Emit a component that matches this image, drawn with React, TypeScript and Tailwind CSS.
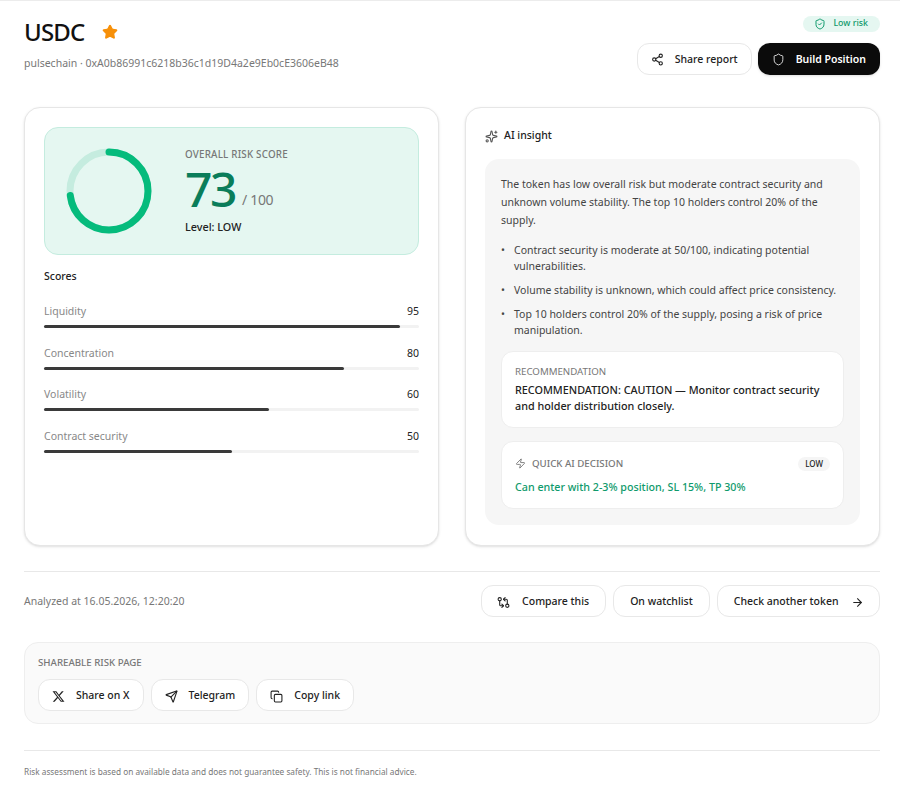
import { ArrowRight, Copy, GitCompareArrows, Send, Share2, Shield, ShieldCheck, Sparkles, Star, Zap } from "lucide-react";
import type { ReactNode } from "react";

const scores = [
  { label: "Liquidity", value: 95 },
  { label: "Concentration", value: 80 },
  { label: "Volatility", value: 60 },
  { label: "Contract security", value: 50 },
];

const bullets = [
  "Contract security is moderate at 50/100, indicating potential vulnerabilities.",
  "Volume stability is unknown, which could affect price consistency.",
  "Top 10 holders control 20% of the supply, posing a risk of price manipulation.",
];

const ActionButton = ({ children }: { children: ReactNode }) => (
  <button className="flex h-[32px] items-center rounded-[12px] border border-[#e8e8e8] bg-white px-[15.5px] pt-[2px] text-[10.5px] font-medium text-[#222]">
    {children}
  </button>
);

const ShareButton = ({ children }: { children: ReactNode }) => (
  <button className="flex h-[32px] items-center gap-[11px] rounded-[12px] border border-[#e8e8e8] bg-white px-[13px] pt-[2px] text-[10.5px] font-medium text-[#222]">
    {children}
  </button>
);

const App = () => {
  return (
    <div className="h-[804px] w-[900px] overflow-hidden border-t border-[#ececec] bg-white pr-[20px] pl-[24px] font-['Noto_Sans','Open_Sans',sans-serif] text-[#111]">
      <div className="flex h-[106px] items-start justify-between">
        <div className="pt-[16px]">
          <div className="flex items-center gap-[17px]">
            <h1 className="text-[24px] leading-[30px] font-medium tracking-[-0.8px] text-[#111]">USDC</h1>
            <Star className="h-[16px] w-[16px] fill-[#f79009] text-[#f79009]" />
          </div>
          <p className="mt-[8px] text-[10.5px] leading-[16px] text-[#777]">
            pulsechain · 0xA0b86991c6218b36c1d19D4a2e9Eb0cE3606eB48
          </p>
        </div>
        <div className="flex flex-col items-end pt-[15px]">
          <div className="flex h-[16px] items-center gap-[7px] rounded-full bg-[#e5f7f1] pr-[12px] pl-[11px] text-[8.8px] font-medium text-[#0f9a6c]">
            <ShieldCheck className="h-[12px] w-[12px]" />
            Low risk
          </div>
          <div className="mt-[11px] flex gap-[6px]">
            <button className="flex h-[32px] items-center gap-[11px] rounded-[12px] border border-[#e8e8e8] bg-white px-[13px] pt-[1px] text-[10.5px] font-medium text-[#222]">
              <Share2 className="h-[13px] w-[13px]" />
              Share report
            </button>
            <button className="flex h-[32px] items-center gap-[11px] rounded-[12px] bg-[#0b0b0b] px-[14px] pt-[1px] text-[10.5px] font-semibold text-white shadow-sm">
              <Shield className="h-[13px] w-[13px]" strokeWidth={1.5} />
              Build Position
            </button>
          </div>
        </div>
      </div>

      <div className="grid grid-cols-[415px_415px] gap-[26px]">
        <section className="h-[439px] rounded-[16px] border border-[#e6e6e6] bg-white p-[19px] shadow-sm">
          <div className="flex h-[128px] items-center gap-[32px] rounded-[14px] border border-[#c4ecdf] bg-[#e5f7f1] pl-[20px]">
            <svg viewBox="0 0 88 88" className="h-[88px] w-[88px] -rotate-90">
              <circle cx="44" cy="44" r="39" fill="none" stroke="#c5ecdf" strokeWidth="7" />
              <circle cx="44" cy="44" r="39" fill="none" stroke="#05bb7c" strokeWidth="7" strokeLinecap="round" strokeDasharray="178.9 245" />
            </svg>
            <div>
              <p className="text-[9.8px] leading-[14px] font-medium tracking-[0.2px] text-[#777]">OVERALL RISK SCORE</p>
              <div className="mt-[1px] flex items-end">
                <span className="text-[48px] leading-[52px] font-medium tracking-[-2.5px] text-[#0a7d5a]">73</span>
                <span className="mb-[5px] ml-[7px] text-[14px] leading-[20px] tracking-[-0.3px] text-[#777]">/ 100</span>
              </div>
              <p className="mt-[4px] text-[10.8px] leading-[16px] font-medium text-[#222]">Level: LOW</p>
            </div>
          </div>
          <h2 className="mt-[13px] text-[10.5px] leading-[16px] font-medium text-[#222]">Scores</h2>
          <div className="mt-[19px] flex flex-col gap-[16.7px]">
            {scores.map((score) => (
              <div key={score.label}>
                <div className="flex justify-between text-[10.5px] leading-[16px]">
                  <span className="text-[#888]">{score.label}</span>
                  <span className="text-[#222]">{score.value}</span>
                </div>
                <div className="mt-[6px] h-[3px] rounded-full bg-[#f2f2f2]">
                  <div className="h-full rounded-full bg-[#3a3a3a]" style={{ width: `${score.value}%` }} />
                </div>
              </div>
            ))}
          </div>
        </section>

        <section className="h-[439px] rounded-[16px] border border-[#e6e6e6] bg-white px-[19px] pt-[19px] shadow-sm">
          <div className="flex h-[18px] items-center gap-[6px]">
            <Sparkles className="h-[13px] w-[13px] text-[#555]" />
            <h2 className="text-[10.5px] font-medium text-[#222]">AI insight</h2>
          </div>
          <div className="mt-[14px] h-[366px] rounded-[14px] bg-[#f6f6f6] px-[16px] pt-[16px]">
            <p className="text-[10.5px] leading-[18px] text-[#444]">
              The token has low overall risk but moderate contract security and unknown volume stability. The top 10 holders control 20% of the supply.
            </p>
            <ul className="mt-[13px] flex flex-col gap-[8px]">
              {bullets.map((item) => (
                <li key={item} className="flex text-[10.5px] leading-[16px] text-[#444]">
                  <span className="w-[13px] shrink-0">•</span>
                  <span>{item}</span>
                </li>
              ))}
            </ul>
            <div className="mt-[13px] h-[77px] rounded-[12px] border border-[#eee] bg-white px-[13px] pt-[12px]">
              <p className="text-[9.7px] leading-[16px] text-[#777]">RECOMMENDATION</p>
              <p className="mt-[2px] text-[10.8px] leading-[16px] font-medium text-[#222]">
                RECOMMENDATION: CAUTION — Monitor contract security and holder distribution closely.
              </p>
            </div>
            <div className="mt-[13px] h-[68px] rounded-[12px] border border-[#eee] bg-white px-[13px] pt-[14px]">
              <div className="flex h-[16px] items-center justify-between">
                <div className="flex items-center gap-[6px] text-[9.7px] font-medium text-[#777]">
                  <Zap className="h-[11px] w-[11px]" />
                  QUICK AI DECISION
                </div>
                <span className="rounded-full bg-[#f5f5f5] px-[7px] py-[1px] text-[8px] font-medium text-[#222]">LOW</span>
              </div>
              <p className="mt-[7px] text-[10.7px] leading-[16px] font-medium text-[#0f9a6c]">Can enter with 2-3% position, SL 15%, TP 30%</p>
            </div>
          </div>
        </section>
      </div>

      <div className="mt-[25px] border-t border-[#e8e8e8]">
        <div className="flex items-center justify-between pt-[13px]">
          <p className="pt-[2px] text-[10.5px] text-[#777]">Analyzed at 16.05.2026, 12:20:20</p>
          <div className="flex gap-[7px]">
            <ActionButton>
              <GitCompareArrows className="mr-[12px] h-[13px] w-[13px]" />
              Compare this
            </ActionButton>
            <ActionButton>
              <span className="mx-[1px]">On watchlist</span>
            </ActionButton>
            <ActionButton>
              Check another token
              <ArrowRight className="ml-[12px] h-[13px] w-[13px]" />
            </ActionButton>
          </div>
        </div>
      </div>

      <div className="mt-[25px] h-[82px] rounded-[14px] border border-[#eee] bg-[#fafafa] px-[13px] pt-[12px]">
        <p className="text-[9.7px] leading-[16px] font-medium text-[#777]">SHAREABLE RISK PAGE</p>
        <div className="mt-[8px] flex gap-[7px]">
          <ShareButton>
            <svg viewBox="0 0 24 24" className="h-[13px] w-[13px] fill-current">
              <path d="M18.2 2.3h3.4l-7.4 8.5L23 21.7h-6.8l-5.3-7-6.1 7H1.4l7.9-9L1 2.3h7l4.8 6.4zm-1.2 17.4h1.9L6.9 4.2H4.9z" />
            </svg>
            Share on X
          </ShareButton>
          <ShareButton>
            <Send className="h-[13px] w-[13px]" />
            Telegram
          </ShareButton>
          <ShareButton>
            <Copy className="h-[13px] w-[13px]" />
            Copy link
          </ShareButton>
        </div>
      </div>

      <div className="mt-[26px] border-t border-[#e8e8e8] pt-[14px]">
        <p className="text-[8.25px] leading-[14px] text-[#777]">
          Risk assessment is based on available data and does not guarantee safety. This is not financial advice.
        </p>
      </div>
    </div>
  );
};

export default App;
